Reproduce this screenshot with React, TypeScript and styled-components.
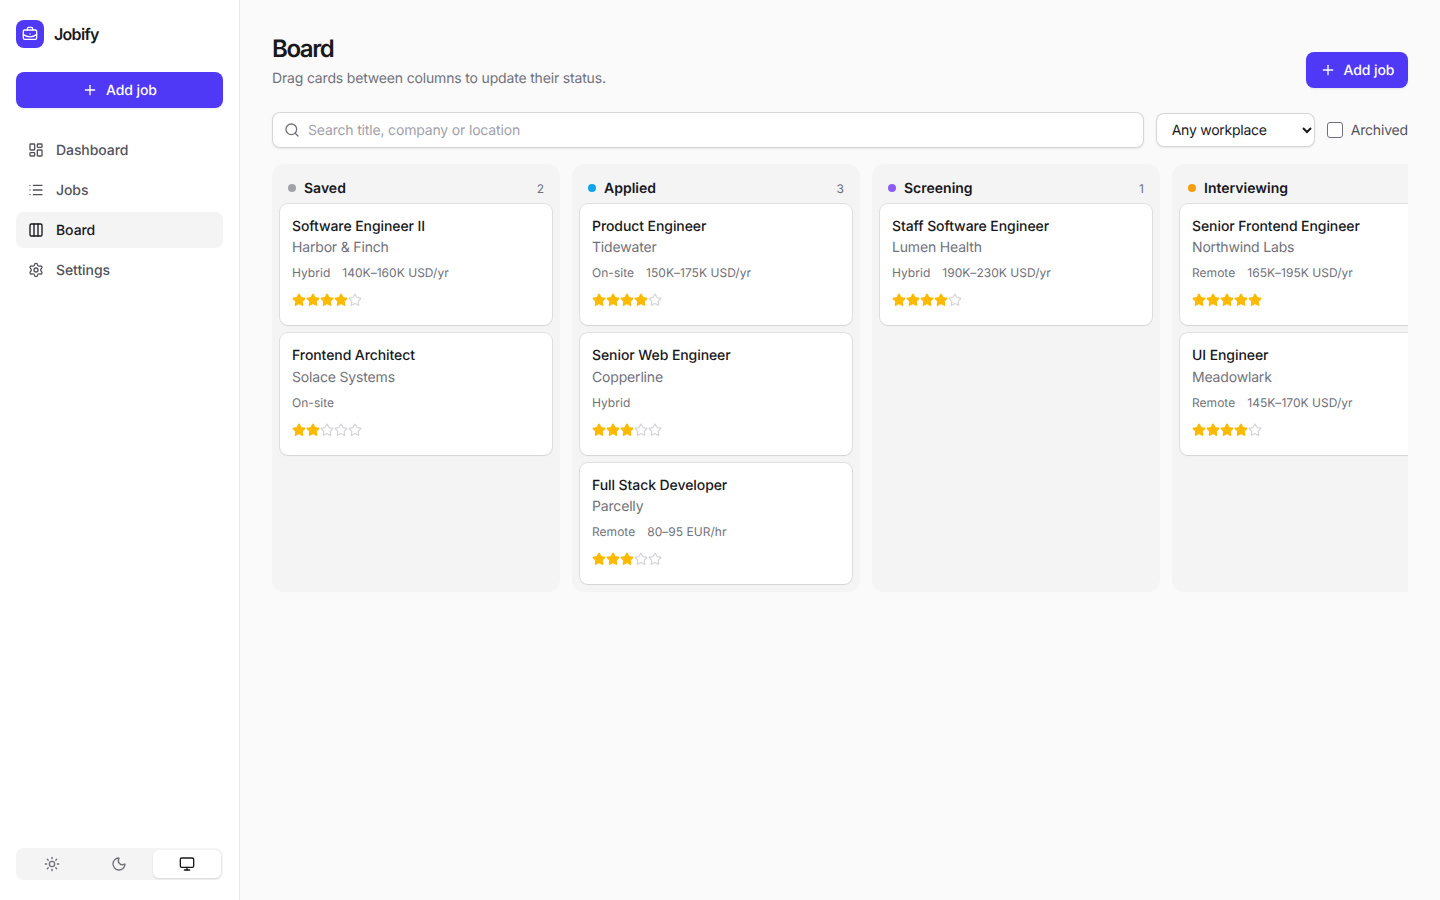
import React from "react";
import styled, { createGlobalStyle } from "styled-components";
import {
  BriefcaseBusiness,
  Columns3,
  LayoutDashboard,
  List,
  Monitor,
  Moon,
  Plus,
  Search,
  Settings,
  Star,
  Sun,
} from "lucide-react";

const Global = createGlobalStyle`
  html, body { margin: 0; height: 100%; }
  body { font-family: Inter, "Liberation Sans", sans-serif; background: #fafafa; color: #18181b; -webkit-font-smoothing: antialiased; text-rendering: geometricPrecision; }
  button, input, select { text-rendering: geometricPrecision; }
  * { box-sizing: border-box; }
`;

const Shell = styled.div`
  display: flex;
  height: 900px;
  width: 1440px;
  overflow: hidden;
`;

const Sidebar = styled.aside`
  width: 240px;
  flex: none;
  display: flex;
  flex-direction: column;
  background: #fff;
  border-right: 1px solid #e8e8ea;
  padding: 20px 16px;
`;

const Brand = styled.div`
  display: flex;
  align-items: center;
  gap: 10px;
  height: 28px;
  margin-bottom: 24px;
`;

const Logo = styled.div`
  width: 28px;
  height: 28px;
  border-radius: 8px;
  background: #4f39f6;
  color: #fff;
  display: flex;
  align-items: center;
  justify-content: center;
`;

const BrandName = styled.span`
  font-size: 16px;
  font-weight: 600;
  letter-spacing: -0.7px;
`;

const PrimaryButton = styled.button<{ $wide?: boolean }>`
  display: flex;
  align-items: center;
  justify-content: center;
  gap: 8px;
  height: 36px;
  width: ${(p) => (p.$wide ? "100%" : "102px")};
  padding: 0;
  border: 0;
  border-radius: 8px;
  background: #4f39f6;
  color: #fff;
  font: 500 14px Inter, sans-serif;
  letter-spacing: -0.1px;
  box-shadow: 0 1px 2px rgba(0, 0, 0, 0.08);
`;

const Nav = styled.nav`
  display: flex;
  flex-direction: column;
  gap: 4px;
  margin-top: 24px;
`;

const NavItem = styled.a<{ $active?: boolean }>`
  display: flex;
  align-items: center;
  gap: 12px;
  height: 36px;
  padding: 0 12px;
  border-radius: 8px;
  font-size: 14px;
  font-weight: 500;
  letter-spacing: -0.08px;
  color: ${(p) => (p.$active ? "#18181b" : "#52525b")};
  background: ${(p) => (p.$active ? "#f4f4f5" : "transparent")};
`;

const ThemeSwitch = styled.div`
  margin-top: auto;
  display: grid;
  grid-template-columns: repeat(3, 1fr);
  height: 32px;
  padding: 2px;
  border-radius: 8px;
  background: #f4f4f5;
`;

const ThemeButton = styled.div<{ $active?: boolean }>`
  display: flex;
  align-items: center;
  justify-content: center;
  border-radius: 6px;
  color: ${(p) => (p.$active ? "#18181b" : "#71717a")};
  background: ${(p) => (p.$active ? "#fff" : "transparent")};
  box-shadow: ${(p) => (p.$active ? "0 1px 2px rgba(0,0,0,.12)" : "none")};
`;

const Main = styled.main`
  flex: 1;
  min-width: 0;
  padding: 32px;
  background: #fafafa;
`;

const PageHeader = styled.header`
  display: flex;
  justify-content: space-between;
  align-items: flex-start;
  height: 56px;
  margin-bottom: 24px;
`;

const HeaderActions = styled.div`
  align-self: flex-end;
`;

const Title = styled.h1`
  margin: 0;
  font-size: 24px;
  line-height: 34px;
  font-weight: 600;
  letter-spacing: -1.4px;
`;

const Subtitle = styled.p`
  margin: 3px 0 0;
  font-size: 14px;
  line-height: 20px;
  letter-spacing: -0.17px;
  color: #71717a;
`;

const Toolbar = styled.div`
  display: flex;
  align-items: center;
  gap: 12px;
  margin-bottom: 16px;
`;

const SearchBox = styled.label`
  flex: 1;
  display: flex;
  align-items: center;
  gap: 8px;
  height: 36px;
  padding: 0 12px;
  background: #fff;
  border-radius: 8px;
  color: #71717a;
  box-shadow: inset 0 0 0 1px rgba(0, 0, 0, 0.16), 0 1px 2px rgba(0, 0, 0, 0.08);
`;

const SearchInput = styled.input`
  flex: 1;
  padding: 0;
  border: 0;
  outline: 0;
  background: transparent;
  font: 14px Inter, sans-serif;
  letter-spacing: -0.17px;
  color: #18181b;
  &::placeholder { color: #a1a1aa; opacity: 1; }
`;

const Select = styled.select`
  width: 159px;
  height: 34px;
  padding: 0 4px 0 12px;
  border: 0;
  border-radius: 8px;
  background: #fff;
  font: 14px Inter, sans-serif;
  letter-spacing: -0.25px;
  color: #18181b;
  box-shadow: inset 0 0 0 1px rgba(0, 0, 0, 0.16), 0 1px 2px rgba(0, 0, 0, 0.08);
`;

const ArchivedLabel = styled.label`
  display: flex;
  align-items: center;
  gap: 8px;
  font-size: 14px;
  letter-spacing: -0.17px;
  color: #52525b;
  white-space: nowrap;
`;

const Checkbox = styled.span`
  width: 16px;
  height: 16px;
  border-radius: 3px;
  border: 1px solid #71717a;
  background: #fff;
`;

const Board = styled.div`
  display: flex;
  gap: 12px;
  overflow: hidden;
`;

const Column = styled.section`
  flex: none;
  width: 288px;
  padding: 8px;
  border-radius: 12px;
  background: #f4f4f5;
`;

const ColumnHeader = styled.div`
  display: flex;
  align-items: center;
  gap: 8px;
  height: 32px;
  padding: 0 8px;
`;

const Dot = styled.span<{ $color: string }>`
  width: 8px;
  height: 8px;
  border-radius: 50%;
  background: ${(p) => p.$color};
`;

const ColumnName = styled.span`
  flex: 1;
  font-size: 14px;
  font-weight: 600;
`;

const Count = styled.span`
  font-size: 12px;
  color: #71717a;
`;

const CardList = styled.div`
  display: flex;
  flex-direction: column;
  gap: 8px;
`;

const Card = styled.article`
  height: 121.3px;
  padding: 13px 12px 0;
  border-radius: 8px;
  background: #fff;
  box-shadow: 0 0 0 1px rgba(0, 0, 0, 0.08), 0 1px 2px rgba(0, 0, 0, 0.06);
`;

const CardTitle = styled.div`
  font-size: 14px;
  line-height: 20px;
  font-weight: 500;
  letter-spacing: -0.08px;
`;

const Company = styled.div`
  margin-top: 1.3px;
  font-size: 14px;
  line-height: 20px;
  letter-spacing: -0.17px;
  color: #71717a;
`;

const Meta = styled.div`
  display: flex;
  gap: 12px;
  margin-top: 7px;
  font-size: 12px;
  line-height: 16px;
  letter-spacing: 0.03px;
  color: #71717a;
`;

const Stars = styled.div`
  display: flex;
  margin-top: 12px;
  height: 14px;
`;

const STATUS = [
  {
    name: "Saved",
    color: "#a1a1aa",
    cards: [
      { t: "Software Engineer II", c: "Harbor & Finch", w: "Hybrid", p: "140K–160K USD/yr", r: 4 },
      { t: "Frontend Architect", c: "Solace Systems", w: "On-site", p: "", r: 2 },
    ],
  },
  {
    name: "Applied",
    color: "#0ea5e9",
    cards: [
      { t: "Product Engineer", c: "Tidewater", w: "On-site", p: "150K–175K USD/yr", r: 4 },
      { t: "Senior Web Engineer", c: "Copperline", w: "Hybrid", p: "", r: 3 },
      { t: "Full Stack Developer", c: "Parcelly", w: "Remote", p: "80–95 EUR/hr", r: 3 },
    ],
  },
  {
    name: "Screening",
    color: "#8b5cf6",
    cards: [{ t: "Staff Software Engineer", c: "Lumen Health", w: "Hybrid", p: "190K–230K USD/yr", r: 4 }],
  },
  {
    name: "Interviewing",
    color: "#f59e0b",
    cards: [
      { t: "Senior Frontend Engineer", c: "Northwind Labs", w: "Remote", p: "165K–195K USD/yr", r: 5 },
      { t: "UI Engineer", c: "Meadowlark", w: "Remote", p: "145K–170K USD/yr", r: 4 },
    ],
  },
];

const NAV = [
  { label: "Dashboard", Icon: LayoutDashboard },
  { label: "Jobs", Icon: List },
  { label: "Board", Icon: Columns3, active: true },
  { label: "Settings", Icon: Settings },
];

export default function App() {
  return (
    <Shell>
      <Global />
      <Sidebar>
        <Brand>
          <Logo>
            <BriefcaseBusiness size={16} />
          </Logo>
          <BrandName>Jobify</BrandName>
        </Brand>
        <PrimaryButton $wide>
          <Plus size={16} />
          Add job
        </PrimaryButton>
        <Nav>
          {NAV.map(({ label, Icon, active }) => (
            <NavItem key={label} $active={active}>
              <Icon size={16} />
              {label}
            </NavItem>
          ))}
        </Nav>
        <ThemeSwitch>
          <ThemeButton>
            <Sun size={16} />
          </ThemeButton>
          <ThemeButton>
            <Moon size={16} />
          </ThemeButton>
          <ThemeButton $active>
            <Monitor size={16} />
          </ThemeButton>
        </ThemeSwitch>
      </Sidebar>
      <Main>
        <PageHeader>
          <div>
            <Title>Board</Title>
            <Subtitle>Drag cards between columns to update their status.</Subtitle>
          </div>
          <HeaderActions>
            <PrimaryButton>
              <Plus size={16} />
              Add job
            </PrimaryButton>
          </HeaderActions>
        </PageHeader>
        <Toolbar>
          <SearchBox>
            <Search size={16} />
            <SearchInput placeholder="Search title, company or location" />
          </SearchBox>
          <Select defaultValue="any">
            <option value="any">Any workplace</option>
          </Select>
          <ArchivedLabel>
            <Checkbox />
            Archived
          </ArchivedLabel>
        </Toolbar>
        <Board>
          {STATUS.map((col) => (
            <Column key={col.name}>
              <ColumnHeader>
                <Dot $color={col.color} />
                <ColumnName>{col.name}</ColumnName>
                <Count>{col.cards.length}</Count>
              </ColumnHeader>
              <CardList>
                {col.cards.map((card) => (
                  <Card key={card.t}>
                    <CardTitle>{card.t}</CardTitle>
                    <Company>{card.c}</Company>
                    <Meta>
                      <span>{card.w}</span>
                      {card.p && <span>{card.p}</span>}
                    </Meta>
                    <Stars>
                      {[1, 2, 3, 4, 5].map((n) => (
                        <Star
                          key={n}
                          size={14}
                          fill={n <= card.r ? "#ffb900" : "none"}
                          color={n <= card.r ? "#ffb900" : "#d4d4d8"}
                        />
                      ))}
                    </Stars>
                  </Card>
                ))}
              </CardList>
            </Column>
          ))}
        </Board>
      </Main>
    </Shell>
  );
}
